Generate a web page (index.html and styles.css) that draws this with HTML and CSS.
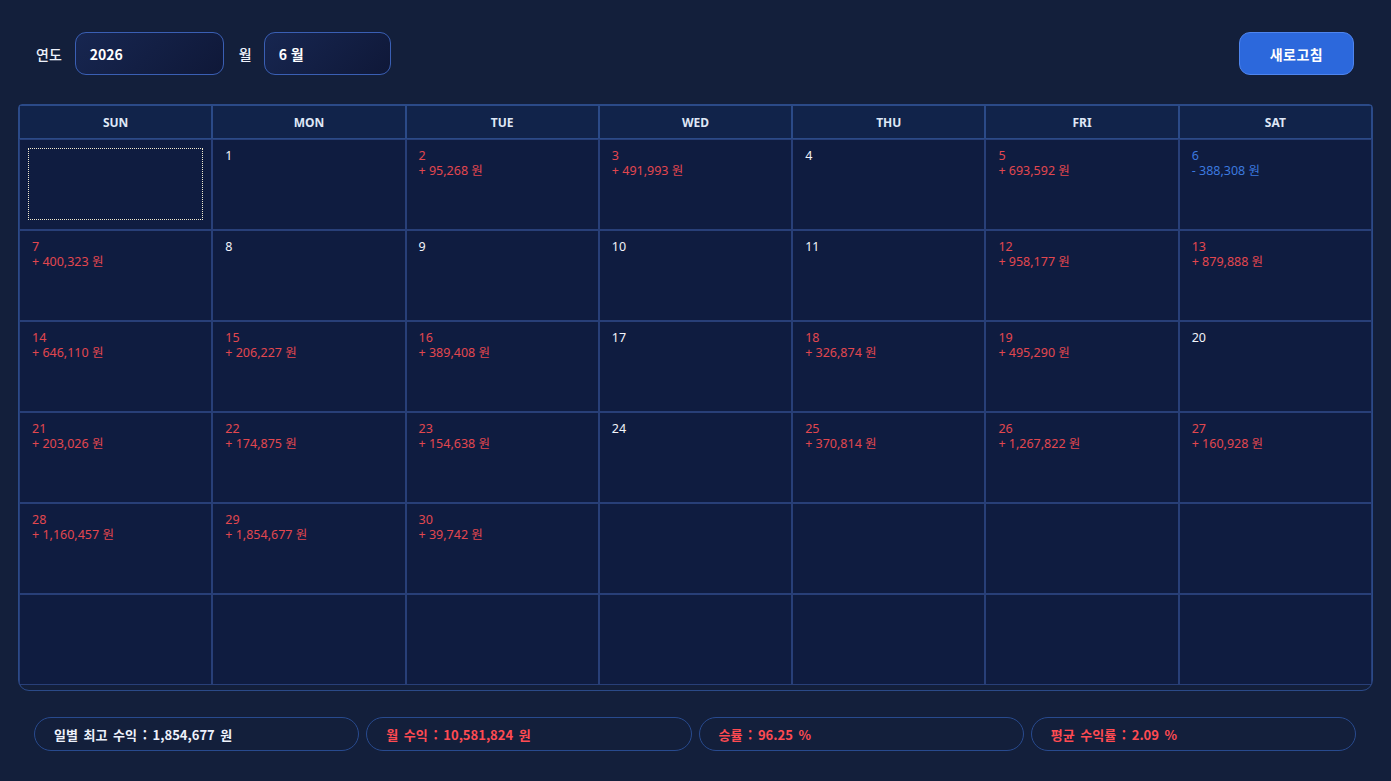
FILE: index.html
```html
<!DOCTYPE html>
<html lang="ko">
<head>
<meta charset="utf-8">
<title>수익 캘린더</title>
<link rel="stylesheet" href="styles.css">
</head>
<body>
<div class="page">
  <div class="toolbar">
    <div class="selectors">
      <span class="label">연도</span>
      <div class="field year">2026</div>
      <span class="label month-label">월</span>
      <div class="field month">6 월</div>
    </div>
    <button class="refresh">새로고침</button>
  </div>

  <div class="calendar">
    <div class="grid">
      <div class="head">SUN</div>
      <div class="head">MON</div>
      <div class="head">TUE</div>
      <div class="head">WED</div>
      <div class="head">THU</div>
      <div class="head">FRI</div>
      <div class="head">SAT</div>

      <div class="cell"><div class="focus"></div></div>
      <div class="cell"><div class="day">1</div></div>
      <div class="cell pos"><div class="day">2</div><div class="amt">+ 95,268 원</div></div>
      <div class="cell pos"><div class="day">3</div><div class="amt">+ 491,993 원</div></div>
      <div class="cell"><div class="day">4</div></div>
      <div class="cell pos"><div class="day">5</div><div class="amt">+ 693,592 원</div></div>
      <div class="cell neg"><div class="day">6</div><div class="amt">- 388,308 원</div></div>

      <div class="cell pos"><div class="day">7</div><div class="amt">+ 400,323 원</div></div>
      <div class="cell"><div class="day">8</div></div>
      <div class="cell"><div class="day">9</div></div>
      <div class="cell"><div class="day">10</div></div>
      <div class="cell"><div class="day">11</div></div>
      <div class="cell pos"><div class="day">12</div><div class="amt">+ 958,177 원</div></div>
      <div class="cell pos"><div class="day">13</div><div class="amt">+ 879,888 원</div></div>

      <div class="cell pos"><div class="day">14</div><div class="amt">+ 646,110 원</div></div>
      <div class="cell pos"><div class="day">15</div><div class="amt">+ 206,227 원</div></div>
      <div class="cell pos"><div class="day">16</div><div class="amt">+ 389,408 원</div></div>
      <div class="cell"><div class="day">17</div></div>
      <div class="cell pos"><div class="day">18</div><div class="amt">+ 326,874 원</div></div>
      <div class="cell pos"><div class="day">19</div><div class="amt">+ 495,290 원</div></div>
      <div class="cell"><div class="day">20</div></div>

      <div class="cell pos"><div class="day">21</div><div class="amt">+ 203,026 원</div></div>
      <div class="cell pos"><div class="day">22</div><div class="amt">+ 174,875 원</div></div>
      <div class="cell pos"><div class="day">23</div><div class="amt">+ 154,638 원</div></div>
      <div class="cell"><div class="day">24</div></div>
      <div class="cell pos"><div class="day">25</div><div class="amt">+ 370,814 원</div></div>
      <div class="cell pos"><div class="day">26</div><div class="amt">+ 1,267,822 원</div></div>
      <div class="cell pos"><div class="day">27</div><div class="amt">+ 160,928 원</div></div>

      <div class="cell pos"><div class="day">28</div><div class="amt">+ 1,160,457 원</div></div>
      <div class="cell pos"><div class="day">29</div><div class="amt">+ 1,854,677 원</div></div>
      <div class="cell pos"><div class="day">30</div><div class="amt">+ 39,742 원</div></div>
      <div class="cell"></div>
      <div class="cell"></div>
      <div class="cell"></div>
      <div class="cell"></div>

      <div class="cell"></div>
      <div class="cell"></div>
      <div class="cell"></div>
      <div class="cell"></div>
      <div class="cell"></div>
      <div class="cell"></div>
      <div class="cell"></div>
    </div>
  </div>

  <div class="summary">
    <div class="pill white">일별 최고 수익 : 1,854,677 원</div>
    <div class="pill red">월 수익 : 10,581,824 원</div>
    <div class="pill red">승률 : 96.25 %</div>
    <div class="pill red">평균 수익률 : 2.09 %</div>
  </div>
</div>
</body>
</html>
```

FILE: styles.css
```css
* { box-sizing: border-box; }

html, body {
  margin: 0;
  padding: 0;
  background: #131f3b;
  width: 1391px;
  height: 781px;
  overflow: hidden;
}

.page {
  font-family: "Noto Sans CJK KR", "Noto Sans", sans-serif;
  color: #ffffff;
  padding-top: 32px;
}

.toolbar {
  display: flex;
  justify-content: space-between;
  align-items: center;
  padding: 0 37px 0 36px;
  height: 43px;
}

.selectors {
  display: flex;
  align-items: center;
}

.label {
  font-size: 14px;
  font-weight: 500;
  color: #eef2fb;
  margin-right: 13px;
}

.label.month-label { margin-right: 12px; }

.field {
  height: 43px;
  border: 1px solid #3a5fb4;
  border-radius: 11px;
  background: linear-gradient(135deg, #172650 0%, #0f1838 100%);
  display: flex;
  align-items: center;
  padding-left: 14px;
  font-size: 14px;
  font-weight: 700;
  color: #ffffff;
}

.field.year { width: 149px; margin-right: 15px; }
.field.month { width: 127px; }

.refresh {
  width: 115px;
  height: 43px;
  border: 1px solid #4f85ee;
  border-radius: 11px;
  background: #2c68dc;
  color: #ffffff;
  font-family: "Noto Sans CJK KR", "Noto Sans", sans-serif;
  font-size: 14px;
  font-weight: 700;
  letter-spacing: 0.5px;
  cursor: pointer;
}

.calendar {
  margin: 29px 18px 0 18px;
  border: 1px solid #2b4a88;
  border-radius: 4px 4px 11px 11px;
  padding-bottom: 5px;
}

.grid {
  display: grid;
  grid-template-columns: repeat(7, 1fr);
  grid-template-rows: 34px repeat(6, 91px);
}

.head {
  background: #11234a;
  border: 1px solid #2b4a88;
  display: flex;
  align-items: center;
  justify-content: center;
  font-family: "Noto Sans", "Noto Sans CJK KR", sans-serif;
  font-size: 12px;
  font-weight: 700;
  color: #dfe7f6;
}

.cell {
  background: #0f1c40;
  border: 1px solid #283f78;
  padding: 8px 12px;
  font-family: "Noto Sans", "Noto Sans CJK KR", sans-serif;
  font-size: 12.5px;
  line-height: 15px;
  color: #f2f4fa;
}

.cell.pos { color: #e2474f; }
.cell.neg { color: #3c79df; }

.focus {
  margin: 0 -4px;
  height: 72px;
  border: 1px dotted #f1ead0;
}

.summary {
  display: flex;
  gap: 7px;
  padding: 26px 35px 0 34px;
}

.pill {
  flex: 1;
  height: 34px;
  border: 1px solid #284a8e;
  border-radius: 17px;
  display: flex;
  align-items: center;
  padding-left: 19px;
  font-size: 13px;
  font-weight: 700;
  word-spacing: 2px;
}

.pill.white { color: #eef2fb; }
.pill.red { color: #ff4b52; }
```
